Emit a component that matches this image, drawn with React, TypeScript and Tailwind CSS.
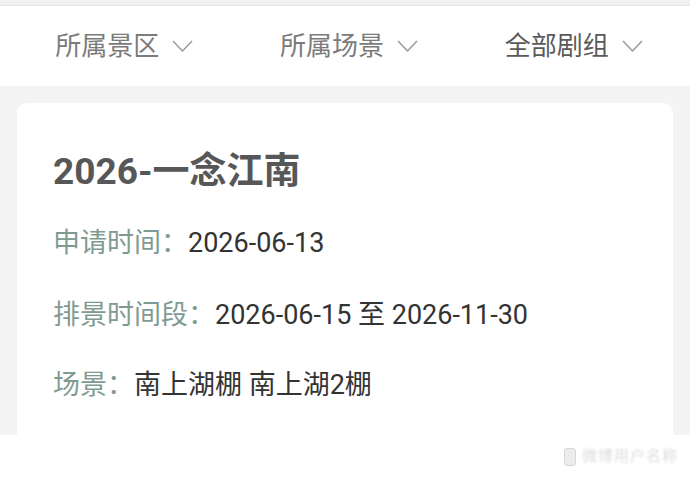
import React from 'react';

const FONT = "font-['Roboto','Noto_Sans_CJK_SC',sans-serif]";

const Chevron: React.FC = () => (
  <svg width="21" height="12" viewBox="0 0 21 12" fill="none" className="shrink-0">
    <polyline points="1,1 10.5,11 20,1" stroke="#9a9a9a" strokeWidth="1.5" strokeLinejoin="round" />
  </svg>
);

const Filter: React.FC<{ label: string; dark?: boolean }> = ({ label, dark }) => (
  <div className="flex items-center justify-center gap-[13px]">
    <span className={`text-[26px] leading-[32px] ${dark ? 'text-[#5a5a5a]' : 'text-[#7b7b7b]'}`}>{label}</span>
    <Chevron />
  </div>
);

const Row: React.FC<{ label: string; value: string; className?: string }> = ({ label, value, className }) => (
  <div className={`flex items-center leading-[36px] ${className ?? ''}`}>
    <span className="text-[27px] text-[#7f9b91]">{label}</span>
    <span className="text-[27px] text-[#333333]">{value}</span>
  </div>
);

export default function App() {
  return (
    <div className={`w-[690px] h-[478px] bg-[#f4f4f4] overflow-hidden flex flex-col ${FONT}`}>
      {/* top strip */}
      <div className="h-[6px] bg-[#f1f1f1] border-b border-[#e8e8e8]" />

      {/* filter bar */}
      <div className="h-[80px] bg-white grid grid-cols-3 items-center pl-[12px] pr-[4px]">
        <Filter label="所属景区" />
        <Filter label="所属场景" />
        <Filter label="全部剧组" dark />
      </div>

      {/* card */}
      <div className="mt-[17px] mx-[17px] flex-1 bg-white rounded-t-[10px] px-[36px] pt-[47px]">
        <h1 className="text-[37px] leading-[44px] font-bold text-[#575757]">2026-一念江南</h1>
        <Row className="mt-[31px]" label="申请时间：" value="2026-06-13" />
        <Row className="mt-[36px]" label="排景时间段：" value="2026-06-15 至 2026-11-30" />
        <Row className="mt-[34px]" label="场景：" value="南上湖棚 南上湖2棚" />
      </div>

      {/* bottom band with watermark */}
      <div className="h-[43px] bg-white flex items-center justify-end pr-[12px] gap-[6px]">
        <div className="w-[12px] h-[18px] rounded-[3px] border border-[#d8d8d8] bg-[#ececec] blur-[0.5px]" />
        <span className="text-[15px] text-[#dcdcdc] blur-[1px] tracking-[1px]">微博用户名称</span>
      </div>
    </div>
  );
}
